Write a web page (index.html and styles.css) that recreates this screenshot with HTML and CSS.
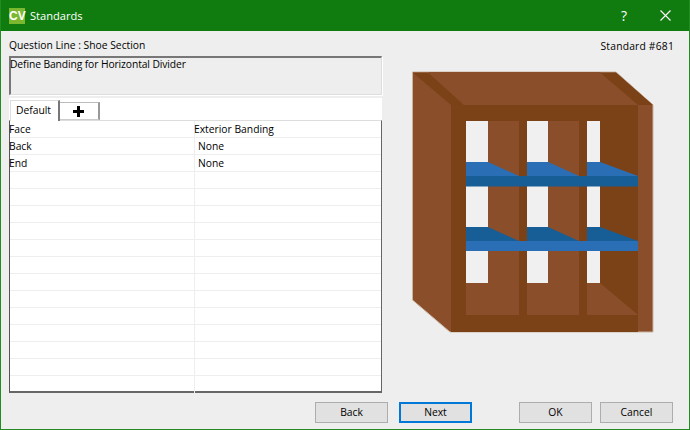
FILE: index.html
```html
<!DOCTYPE html>
<html>
<head>
<meta charset="utf-8"/>
<title>Standards</title>
<link rel="stylesheet" href="styles.css">
</head>
<body>
<div class="win">
	<div class="titlebar">
		<span class="logo">CV</span>
		<span class="title">Standards</span>
		<span class="help">?</span>
		<svg class="close" width="11" height="11" viewBox="0 0 11 11"><path d="M.5 .5L10.5 10.5M10.5 .5L.5 10.5" stroke="#fff" stroke-width="1.1" fill="none"/></svg>
	</div>
	<div class="main">
		<div class="left">
			<div class="label">Question Line : Shoe Section</div>
			<div class="desc">Define Banding for Horizontal Divider</div>
			<div class="tabs">
				<span class="tab on">Default</span>
				<span class="tab add"><svg width="11" height="11" viewBox="0 0 11 11"><path d="M5.5 0V11M0 5.5H11" stroke="#000" stroke-width="3"/></svg></span>
			</div>
			<div class="grid">
				<div class="row"><span class="c1">Face</span><span class="c2 head">Exterior Banding</span></div>
				<div class="row"><span class="c1">Back</span><span class="c2">None</span></div>
				<div class="row"><span class="c1">End</span><span class="c2">None</span></div>
				<div class="row"><span class="c1"></span><span class="c2"></span></div>
				<div class="row"><span class="c1"></span><span class="c2"></span></div>
				<div class="row"><span class="c1"></span><span class="c2"></span></div>
				<div class="row"><span class="c1"></span><span class="c2"></span></div>
				<div class="row"><span class="c1"></span><span class="c2"></span></div>
				<div class="row"><span class="c1"></span><span class="c2"></span></div>
				<div class="row"><span class="c1"></span><span class="c2"></span></div>
				<div class="row"><span class="c1"></span><span class="c2"></span></div>
				<div class="row"><span class="c1"></span><span class="c2"></span></div>
				<div class="row"><span class="c1"></span><span class="c2"></span></div>
				<div class="row"><span class="c1"></span><span class="c2"></span></div>
				<div class="row"><span class="c1"></span><span class="c2"></span></div>
				<div class="row last"><span class="c1"></span><span class="c2"></span></div>
			</div>
		</div>
		<div class="right">
			<div class="std">Standard #681</div>
			<!-- viewBox is in window pixels -->
			<svg class="cabinet" width="250" height="268" viewBox="408 68 250 268">
				<polygon points="412.5,72 616,72 653,105 653,332 450,332 412.5,300" fill="#8a4f2a" stroke="#c9b3a2" stroke-width="1"/>
				<polygon points="428,72 600,72 638,105 464,105" fill="#8a4f2a"/>
				<polygon points="412.5,72.5 428,72.5 464,105 451,105" fill="#7c4217"/>
				<polygon points="600,72.5 616,72.5 653,105 638,105" fill="#7c4217"/>
				<rect x="451" y="105" width="187" height="227" fill="#7c4217"/>
				<rect x="466" y="121" width="134" height="162" fill="#f0f0f0"/>
				<rect x="488" y="121" width="31" height="162" fill="#8a4f2a"/>
				<rect x="548" y="121" width="31" height="162" fill="#8a4f2a"/>
				<rect x="519" y="121" width="8" height="162" fill="#7c4217"/>
				<rect x="579" y="121" width="8" height="162" fill="#7c4217"/>
				<polygon points="466,283 600,283 638,315 466,315" fill="#8a4f2a"/>
				<rect x="519" y="283" width="8" height="32" fill="#7c4217"/>
				<rect x="579" y="283" width="8" height="32" fill="#7c4217"/>

				<polygon points="466,162 488,162 519,176 466,176" fill="#2a6fb5"/>
				<polygon points="527,162 548,162 579,176 527,176" fill="#2a6fb5"/>
				<polygon points="587,162 600,162 638,176 587,176" fill="#2a6fb5"/>
				<rect x="466" y="176" width="172" height="10.5" fill="#175d96"/>

				<polygon points="466,227 488,227 519,241 466,241" fill="#175d96"/>
				<polygon points="527,227 548,227 579,241 527,241" fill="#175d96"/>
				<polygon points="587,227 600,227 638,241 587,241" fill="#175d96"/>
				<rect x="466" y="241" width="172" height="10" fill="#2a6fb5"/>
			</svg>
		</div>
	</div>
	<div class="foot">
		<span class="btn">Back</span>
		<span class="btn next">Next</span>
		<span class="btn ok">OK</span>
		<span class="btn">Cancel</span>
	</div>
</div>
</body>
</html>
```

FILE: styles.css
```css
html, body {
	margin: 0;
	padding: 0;
}
body {
	font-family: "Open Sans", "Noto Sans", sans-serif;
	font-size: 10.3px;
	color: #000;
	background: #eee;
}
.win {
	width: 690px;
	height: 430px;
	box-sizing: border-box;
	border: 1px solid #228b22;
	border-top: 0;
	display: flex;
	flex-direction: column;
	overflow: hidden;
}

/* title bar */
.titlebar {
	height: 31px;
	flex: none;
	background: #107c10;
	color: white;
	display: flex;
	align-items: center;
	padding-left: 9px;
	margin: 0 -1px;
	font-size: 11.1px;
}
.logo {
	width: 16px;
	height: 16px;
	background: #7cb82f;
	font-family: "Liberation Sans", sans-serif;
	font-weight: bold;
	font-size: 12px;
	line-height: 16px;
	text-align: center;
	margin-right: 5px;
}
.title {
	flex: 1;
}
.help {
	font-size: 14px;
	margin-right: 33px;
}
.close {
	margin-right: 19px;
}

/* left side */
.main {
	flex: 1;
	display: flex;
	min-height: 0;
}
.left {
	width: 373px;
	margin-left: 8px;
}
.label {
	height: 25px;
	line-height: 29px;
}
.desc {
	height: 39px;
	box-sizing: border-box;
	border: 1px solid #ddd;
	border-top: 2px solid #777;
	border-left: 2px solid #777;
	box-shadow: 1px 1px 0 white;
	line-height: 12px;
	text-indent: -1px;
	letter-spacing: -0.1px;
}
.tabs {
	margin-top: 3px;
	height: 22px;
	box-sizing: border-box;
	background: white;
	display: flex;
	align-items: flex-end;
	padding-left: 1px;
}
.tab {
	box-sizing: border-box;
	display: flex;
	align-items: center;
	justify-content: center;
}
.tab.on {
	width: 50px;
	height: 21px;
	margin-bottom: -1px;
	padding: 0 2px 3px 0;
	position: relative;
	background: white;
	border-right: 2px solid #777;
	border-top: 1px solid #ddd;
	border-left: 1px solid #ddd;
}
.tab.add {
	width: 40px;
	height: 18px;
	padding-right: 2px;
	background: #fff;
	border-top: 1px solid #bbb;
	border-right: 2px solid #999;
	border-bottom: 1px solid #ccc;
}
.grid {
	border: 1px solid #666;
	border-top: 1px solid #ddd;
	border-left-color: #555;
	border-bottom-width: 2px;
	background: white;
	box-sizing: border-box;
	height: 273px;
}
.row {
	display: flex;
	height: 17px;
	box-sizing: border-box;
	border-bottom: 1px solid #eee;
	line-height: 16px;
}
.row.last {
	border-bottom: 0;
}
.c1 {
	width: 185px;
	box-sizing: border-box;
	border-right: 1px solid #eee;
	text-indent: -1px;
}
.c2 {
	flex: 1;
	padding-left: 3px;
}
.c2.head {
	padding-left: 0;
	text-indent: -1px;
}

/* right side */
.right {
	flex: 1;
}
.std {
	text-align: right;
	line-height: 14px;
	padding: 8px 15px 0 0;
	letter-spacing: 0.2px;
}
.cabinet {
	display: block;
	margin: 15px 0 0 26px;
}

/* buttons */
.foot {
	height: 37px;
	box-sizing: border-box;
	flex: none;
	display: flex;
	padding: 10px 0 0 314px;
	gap: 11px;
}
.btn {
	width: 73px;
	height: 21px;
	box-sizing: border-box;
	background: #e1e1e1;
	border: 1px solid #adadad;
	text-align: center;
	line-height: 19px;
}
.btn.next {
	border: 2px solid #0078d7;
	line-height: 17px;
}
.btn.ok {
	margin-left: 36px;
	margin-right: -3px;
}
```
